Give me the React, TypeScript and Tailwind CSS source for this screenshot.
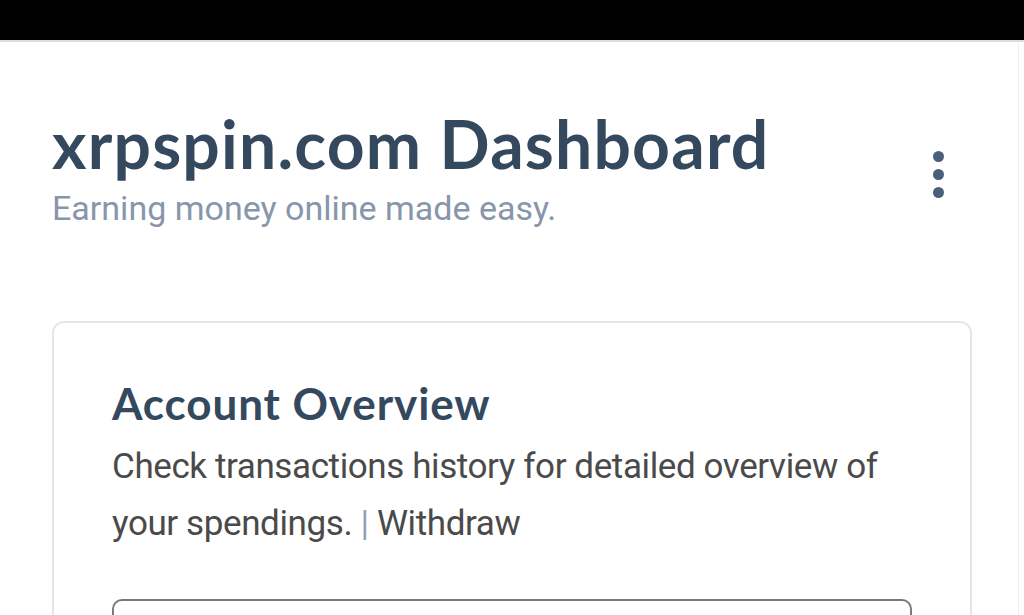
import React from "react";

export default function App() {
  return (
    <div className="w-[1024px] h-[615px] overflow-hidden bg-white relative">
      <div className="h-[40px] bg-black" />
      <div className="h-[2px] bg-[#d9dde3]" />
      <div className="flex">
        <div className="flex-1 pl-[52px] pr-[52px]">
          <div className="flex items-start justify-between pt-[64px]">
            <div>
              <h1
                className="text-[66px] leading-[76px] font-bold text-[#34495e] tracking-[1.2px]"
                style={{ fontFamily: "Lato, 'Noto Sans', sans-serif" }}
              >
                xrpspin.com Dashboard
              </h1>
              <p
                className="text-[34px] leading-[40px] text-[#8796ab] mt-[6px]"
                style={{ fontFamily: "Roboto, sans-serif" }}
              >
                Earning money online made easy.
              </p>
            </div>
            <div className="flex flex-col gap-[7px] mt-[45px] mr-[28px]">
              <span className="w-[11px] h-[11px] rounded-full bg-[#4a5e7e]" />
              <span className="w-[11px] h-[11px] rounded-full bg-[#4a5e7e]" />
              <span className="w-[11px] h-[11px] rounded-full bg-[#4a5e7e]" />
            </div>
          </div>
          <div className="mt-[93px] border-2 border-[#e3e7ec] rounded-[12px] px-[58px] pt-[54px] h-[400px]">
            <h2
              className="text-[44px] leading-[52px] font-bold text-[#34495e] tracking-[0.9px]"
              style={{ fontFamily: "Lato, 'Noto Sans', sans-serif" }}
            >
              Account Overview
            </h2>
            <p
              className="text-[35px] leading-[57px] text-[#4a4a4a] mt-[9px] tracking-[-0.4px]"
              style={{ fontFamily: "Roboto, sans-serif" }}
            >
              <span>Check transactions history for detailed overview of your spendings. </span>
              <span className="text-[#8fa0b8]">|</span>
              <span> Withdraw</span>
            </p>
            <div className="mt-[47px] h-[80px] border-2 border-[#7a7a7a] rounded-[10px] w-[800px]" />
          </div>
        </div>
      </div>
      <div className="absolute right-[5px] top-[42px] bottom-0 w-[1px] bg-[#eceef1]" />
    </div>
  );
}
